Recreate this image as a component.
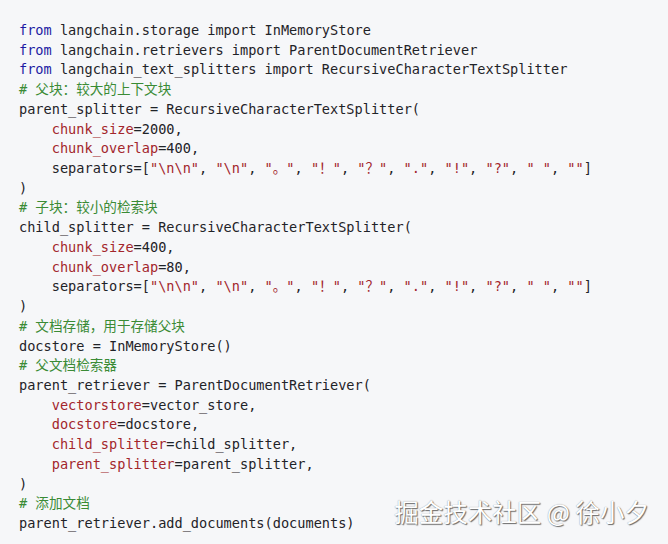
const KW = "text-[#1c1ca3]"
const CM = "text-[#3a8b35]"
const PR = "text-[#a3262c]"
const ST = "text-[#a3262c]"

type Seg = [string, string?]

const lines: Seg[][] = [
  [["from", KW], [" langchain.storage import InMemoryStore"]],
  [["from", KW], [" langchain.retrievers import ParentDocumentRetriever"]],
  [["from", KW], [" langchain_text_splitters import RecursiveCharacterTextSplitter"]],
  [["# 父块：较大的上下文块", CM]],
  [["parent_splitter = RecursiveCharacterTextSplitter("]],
  [["    "], ["chunk_size", PR], ["=2000,"]],
  [["    "], ["chunk_overlap", PR], ["=400,"]],
  [
    ["    separators=["],
    ['"\\n\\n"', ST], [", "], ['"\\n"', ST], [", "], ['"。"', ST], [", "], ['"！"', ST], [", "],
    ['"？"', ST], [", "], ['"."', ST], [", "], ['"!"', ST], [", "], ['"?"', ST], [", "],
    ['" "', ST], [", "], ['""', ST], ["]"],
  ],
  [[")"]],
  [["# 子块：较小的检索块", CM]],
  [["child_splitter = RecursiveCharacterTextSplitter("]],
  [["    "], ["chunk_size", PR], ["=400,"]],
  [["    "], ["chunk_overlap", PR], ["=80,"]],
  [
    ["    separators=["],
    ['"\\n\\n"', ST], [", "], ['"\\n"', ST], [", "], ['"。"', ST], [", "], ['"！"', ST], [", "],
    ['"？"', ST], [", "], ['"."', ST], [", "], ['"!"', ST], [", "], ['"?"', ST], [", "],
    ['" "', ST], [", "], ['""', ST], ["]"],
  ],
  [[")"]],
  [["# 文档存储，用于存储父块", CM]],
  [["docstore = InMemoryStore()"]],
  [["# 父文档检索器", CM]],
  [["parent_retriever = ParentDocumentRetriever("]],
  [["    "], ["vectorstore", PR], ["=vector_store,"]],
  [["    "], ["docstore", PR], ["=docstore,"]],
  [["    "], ["child_splitter", PR], ["=child_splitter,"]],
  [["    "], ["parent_splitter", PR], ["=parent_splitter,"]],
  [[")"]],
  [["# 添加文档", CM]],
  [["parent_retriever.add_documents(documents)"]],
]

export default function App() {
  return (
    <div className="relative h-[544px] w-[668px] overflow-hidden bg-[#f6f7f9]">
      <pre className="pl-[19px] pt-[21px] font-['DejaVu_Sans_Mono','Noto_Sans_CJK_SC',monospace] text-[13.6px] leading-[19.72px] text-[#1f2328]">
        {lines.map((segs, i) => (
          <div key={i} className="whitespace-pre">
            {segs.map(([text, cls], j) => (
              <span key={j} className={cls}>
                {text}
              </span>
            ))}
          </div>
        ))}
      </pre>
      <div className="absolute bottom-[17px] right-[19px] font-['Noto_Sans_CJK_SC',sans-serif] text-[24.5px] leading-[30px] text-white [text-shadow:1px_1px_1px_#6b6b6b,0_0_1px_#888]">
        掘金技术社区 @ 徐小夕
      </div>
    </div>
  )
}
